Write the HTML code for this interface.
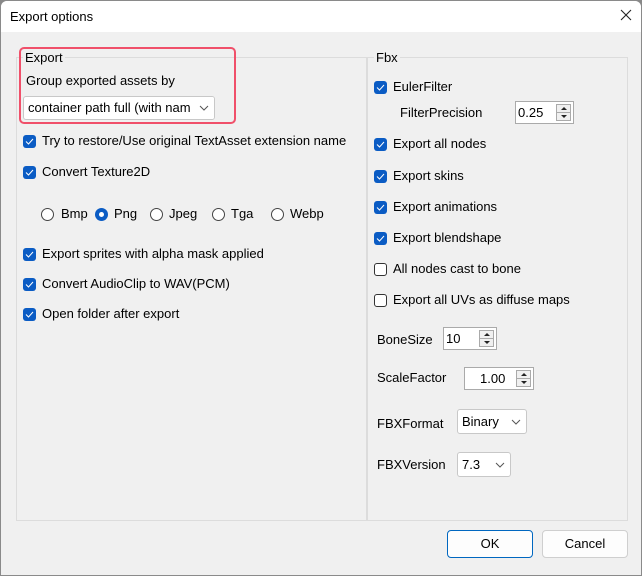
<!DOCTYPE html>
<html><head><meta charset="utf-8"><style>
*{box-sizing:border-box;margin:0;padding:0}
body{width:642px;height:576px;background:#888;font-family:"Segoe UI","Liberation Sans",sans-serif;font-size:13px;color:#000;overflow:hidden;position:relative}
.win{position:absolute;left:0;top:0;width:642px;height:576px;background:#f0f0f0;border:1px solid #8a8a8a;border-radius:7px 7px 0 0;overflow:hidden}
.title{position:absolute;left:0;top:0;width:640px;height:31px;background:#fff}
.a{position:absolute;white-space:nowrap;line-height:16px}
.grp{position:absolute;border:1px solid #dcdcdc}
.cb{position:absolute;width:13px;height:13px;background:#0b5cc4;border-radius:3px}
.cb svg{position:absolute;left:2px;top:3px}
.cbo{position:absolute;width:13px;height:13px;border:1px solid #333;border-radius:3px;background:#fff}
.rad{position:absolute;width:13px;height:13px;border:1px solid #444;border-radius:50%;background:#fff}
.rads{position:absolute;width:13px;height:13px;border-radius:50%;background:#0b5cc4}
.rads:after{content:"";position:absolute;left:4px;top:4px;width:5px;height:5px;border-radius:50%;background:#fff}
.box{position:absolute;background:#fff;border:1px solid #c8c8c8}
.spin{position:absolute;border:1px solid #aaa;background:#fff}
.sb{position:absolute;right:2px;width:15px;height:9px;border:1px solid #aaa;background:#f0f0f0}
.sb.u:after{content:"";position:absolute;left:4px;top:2px;border-left:3px solid transparent;border-right:3px solid transparent;border-bottom:3px solid #222}
.sb.d:after{content:"";position:absolute;left:4px;top:2px;border-left:3px solid transparent;border-right:3px solid transparent;border-top:3px solid #222}
.btn{position:absolute;background:#fdfdfd;border:1px solid #cfcfcf;border-radius:4px;text-align:center;line-height:26px}
</style></head><body><div class="win">
<div class="title"></div>
<div class="a" style="left:9px;top:8px">Export options</div>
<svg class="a" style="left:619px;top:8px" width="12" height="12"><path d="M1 1L11 11M11 1L1 11" stroke="#222" stroke-width="1.1"/></svg>

<div class="grp" style="left:15px;top:56px;width:351px;height:464px"></div>
<div class="a" style="left:22px;top:49px;background:#f0f0f0;padding:0 2px">Export</div>
<div class="grp" style="left:366px;top:56px;width:261px;height:464px"></div>
<div class="a" style="left:373px;top:49px;background:#f0f0f0;padding:0 2px">Fbx</div>

<div class="a" style="left:25px;top:72px">Group exported assets by</div>
<div class="box" style="left:22px;top:95px;width:192px;height:24px;border-radius:3px;overflow:hidden"><span class="a" style="left:4px;top:3px">container path full (with name)</span><span style="position:absolute;right:0;top:0;width:24px;height:22px;background:#fff"></span><svg style="position:absolute;right:5px;top:8px" width="10" height="6"><path d="M1 1L5 5L9 1" fill="none" stroke="#555"/></svg></div>
<div style="position:absolute;left:18px;top:46px;width:217px;height:77px;border:2px solid #f0506a;border-radius:5px"></div>

<div class="cb" style="left:22px;top:134px"><svg width="9" height="7"><path d="M1 3.5L3.5 6L8 1" fill="none" stroke="#fff" stroke-width="1"/></svg></div>
<div class="a" style="left:41px;top:132px">Try to restore/Use original TextAsset extension name</div>
<div class="cb" style="left:22px;top:165px"><svg width="9" height="7"><path d="M1 3.5L3.5 6L8 1" fill="none" stroke="#fff" stroke-width="1"/></svg></div>
<div class="a" style="left:41px;top:163px">Convert Texture2D</div>
<div class="rad" style="left:40px;top:207px"></div><div class="a" style="left:60px;top:205px">Bmp</div>
<div class="rads" style="left:94px;top:207px"></div><div class="a" style="left:113px;top:205px">Png</div>
<div class="rad" style="left:149px;top:207px"></div><div class="a" style="left:168px;top:205px">Jpeg</div>
<div class="rad" style="left:211px;top:207px"></div><div class="a" style="left:230px;top:205px">Tga</div>
<div class="rad" style="left:270px;top:207px"></div><div class="a" style="left:289px;top:205px">Webp</div>
<div class="cb" style="left:22px;top:247px"><svg width="9" height="7"><path d="M1 3.5L3.5 6L8 1" fill="none" stroke="#fff" stroke-width="1"/></svg></div>
<div class="a" style="left:41px;top:245px">Export sprites with alpha mask applied</div>
<div class="cb" style="left:22px;top:277px"><svg width="9" height="7"><path d="M1 3.5L3.5 6L8 1" fill="none" stroke="#fff" stroke-width="1"/></svg></div>
<div class="a" style="left:41px;top:275px">Convert AudioClip to WAV(PCM)</div>
<div class="cb" style="left:22px;top:307px"><svg width="9" height="7"><path d="M1 3.5L3.5 6L8 1" fill="none" stroke="#fff" stroke-width="1"/></svg></div>
<div class="a" style="left:41px;top:305px">Open folder after export</div>

<div class="cb" style="left:373px;top:80px"><svg width="9" height="7"><path d="M1 3.5L3.5 6L8 1" fill="none" stroke="#fff" stroke-width="1"/></svg></div>
<div class="a" style="left:392px;top:78px">EulerFilter</div>
<div class="a" style="left:399px;top:104px">FilterPrecision</div>
<div class="spin" style="left:514px;top:100px;width:59px;height:23px"><span class="a" style="left:2px;top:3px">0.25</span><div class="sb u" style="top:2px"></div><div class="sb d" style="top:10px"></div></div>
<div class="cb" style="left:373px;top:137px"><svg width="9" height="7"><path d="M1 3.5L3.5 6L8 1" fill="none" stroke="#fff" stroke-width="1"/></svg></div>
<div class="a" style="left:392px;top:135px">Export all nodes</div>
<div class="cb" style="left:373px;top:169px"><svg width="9" height="7"><path d="M1 3.5L3.5 6L8 1" fill="none" stroke="#fff" stroke-width="1"/></svg></div>
<div class="a" style="left:392px;top:167px">Export skins</div>
<div class="cb" style="left:373px;top:200px"><svg width="9" height="7"><path d="M1 3.5L3.5 6L8 1" fill="none" stroke="#fff" stroke-width="1"/></svg></div>
<div class="a" style="left:392px;top:198px">Export animations</div>
<div class="cb" style="left:373px;top:231px"><svg width="9" height="7"><path d="M1 3.5L3.5 6L8 1" fill="none" stroke="#fff" stroke-width="1"/></svg></div>
<div class="a" style="left:392px;top:229px">Export blendshape</div>
<div class="cbo" style="left:373px;top:262px"></div>
<div class="a" style="left:392px;top:260px">All nodes cast to bone</div>
<div class="cbo" style="left:373px;top:293px"></div>
<div class="a" style="left:392px;top:291px">Export all UVs as diffuse maps</div>

<div class="a" style="left:376px;top:331px">BoneSize</div>
<div class="spin" style="left:442px;top:326px;width:54px;height:23px"><span class="a" style="left:2px;top:3px">10</span><div class="sb u" style="top:2px"></div><div class="sb d" style="top:10px"></div></div>
<div class="a" style="left:376px;top:369px">ScaleFactor</div>
<div class="spin" style="left:463px;top:366px;width:70px;height:23px"><span class="a" style="left:15px;top:3px">1.00</span><div class="sb u" style="top:2px"></div><div class="sb d" style="top:10px"></div></div>
<div class="a" style="left:376px;top:415px">FBXFormat</div>
<div class="box" style="left:456px;top:408px;width:70px;height:25px;border-radius:3px"><span class="a" style="left:4px;top:4px">Binary</span><svg style="position:absolute;right:5px;top:9px" width="10" height="6"><path d="M1 1L5 5L9 1" fill="none" stroke="#555"/></svg></div>
<div class="a" style="left:376px;top:456px">FBXVersion</div>
<div class="box" style="left:456px;top:451px;width:54px;height:25px;border-radius:3px"><span class="a" style="left:4px;top:4px">7.3</span><svg style="position:absolute;right:5px;top:9px" width="10" height="6"><path d="M1 1L5 5L9 1" fill="none" stroke="#555"/></svg></div>

<div class="btn" style="left:446px;top:529px;width:86px;height:28px;border:1px solid #0067c0">OK</div>
<div class="btn" style="left:541px;top:529px;width:86px;height:28px">Cancel</div>
</div></body></html>
